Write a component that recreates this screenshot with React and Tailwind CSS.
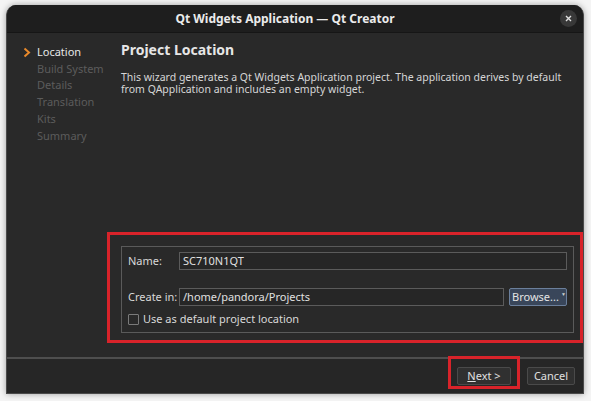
import React from "react";

const font = { fontFamily: '"Noto Sans", "Open Sans", sans-serif' };

function Chevron() {
  return (
    <svg width="8" height="11" viewBox="0 0 8 11" className="shrink-0">
      <polyline points="1.5,1.5 6,5.5 1.5,9.5" fill="none" stroke="#e8892b" strokeWidth="2" />
    </svg>
  );
}

function Sidebar() {
  const steps = ["Build System", "Details", "Translation", "Kits", "Summary"];
  return (
    <div className="w-[108px] shrink-0 pt-[11px] pl-[16px] text-[11px] leading-[16.7px]">
      <div className="flex items-center gap-[6px] text-[#e6e6e6]">
        <Chevron />
        <span>Location</span>
      </div>
      {steps.map((s) => (
        <div key={s} className="pl-[14px] text-[#5c5c5c]">
          {s}
        </div>
      ))}
    </div>
  );
}

function Field({ children, className = "" }) {
  return (
    <div
      className={
        "h-[18px] border border-[#5b5b5b] bg-[#262626] px-[3px] text-[11px] leading-[16px] text-[#e0e0e0] " +
        className
      }
    >
      {children}
    </div>
  );
}

export default function App() {
  return (
    <div className="w-[591px] h-[401px] bg-[#f4f4f4] overflow-hidden" style={font}>
      <div className="ml-[6px] mt-[5px] w-[578px] h-[389px] rounded-t-[10px] overflow-hidden flex flex-col bg-[#292929] shadow-[0_0_6px_rgba(0,0,0,0.35)] border-x border-b border-[#4a4a4a]">
        {/* title bar */}
        <div className="relative h-[28px] shrink-0 bg-[#1e1e1e] flex items-center justify-center pr-[20px] border-b border-[#161616]">
          <span className="text-[12px] font-bold text-[#ebebeb]">Qt Widgets Application — Qt Creator</span>
          <div className="absolute right-[6px] top-[5px] w-[17px] h-[17px] rounded-full bg-[#383838] flex items-center justify-center">
            <svg width="7" height="7" viewBox="0 0 7 7">
              <path d="M1 1 L6 6 M6 1 L1 6" stroke="#e0e0e0" strokeWidth="1.4" />
            </svg>
          </div>
        </div>

        {/* wizard body */}
        <div className="flex-1 flex min-h-0">
          <Sidebar />
          <div className="flex-1 flex flex-col pt-[8px] pl-[6px] pr-[9px] pb-[24px]">
            <div className="text-[14px] font-bold text-[#e6e6e6] leading-[18px]">Project Location</div>
            <p className="mt-[12px] text-[10.5px] leading-[12px] text-[#d6d6d6] pr-[10px]">
              This wizard generates a Qt Widgets Application project. The application derives by default from
              QApplication and includes an empty widget.
            </p>

            <div className="relative mt-auto h-[87px] border border-[#5a5a5a] px-[6px] pt-[5px] text-[11px] text-[#d8d8d8]">
              <div className="flex items-center">
                <span className="w-[51px] shrink-0">Name:</span>
                <Field className="flex-1">SC710N1QT</Field>
              </div>
              <div className="mt-[18px] flex items-center">
                <span className="w-[51px] shrink-0">Create in:</span>
                <Field className="flex-1">/home/pandora/Projects</Field>
                <div className="ml-[5px] w-[58px] h-[18px] shrink-0 rounded-[2px] border border-[#6b7f9b] bg-[#39465a] flex items-center pl-[2px] text-[11px] text-[#e4e4e4]">
                  <span>Browse...</span>
                  <span className="ml-[2px] mb-[5px] text-[5px] leading-none text-[#cfcfcf]">▼</span>
                </div>
              </div>
              <div className="mt-[5px] flex items-center gap-[4px]">
                <div className="w-[11px] h-[11px] border border-[#7a7a7a] rounded-[1px]" />
                <span>Use as default project location</span>
              </div>
              {/* annotation frame */}
              <div className="absolute left-[-15px] top-[-15px] right-[-10px] bottom-[-11px] border-[3px] border-[#d8232a] pointer-events-none" />
            </div>
          </div>
        </div>

        {/* footer */}
        <div className="h-[2px] shrink-0 bg-[#4e4e4e]" />
        <div className="h-[34px] shrink-0 flex items-start justify-end gap-[16px] pr-[8px] pt-[8px] bg-[#262626]">
          <div className="relative">
            <div className="w-[54px] h-[18px] rounded-[2px] border border-[#4a4a4a] bg-[#303030] flex items-center justify-center text-[11px] text-[#e0e0e0]">
              <span>
                <span className="underline">N</span>ext &gt;
              </span>
            </div>
            <div className="absolute left-[-9px] top-[-11px] right-[-9px] bottom-[-4px] border-[3px] border-[#d8232a]" />
          </div>
          <div className="w-[48px] h-[18px] rounded-[2px] border border-[#4a4a4a] bg-[#303030] flex items-center justify-center text-[11px] text-[#e0e0e0]">
            Cancel
          </div>
        </div>
      </div>
    </div>
  );
}
